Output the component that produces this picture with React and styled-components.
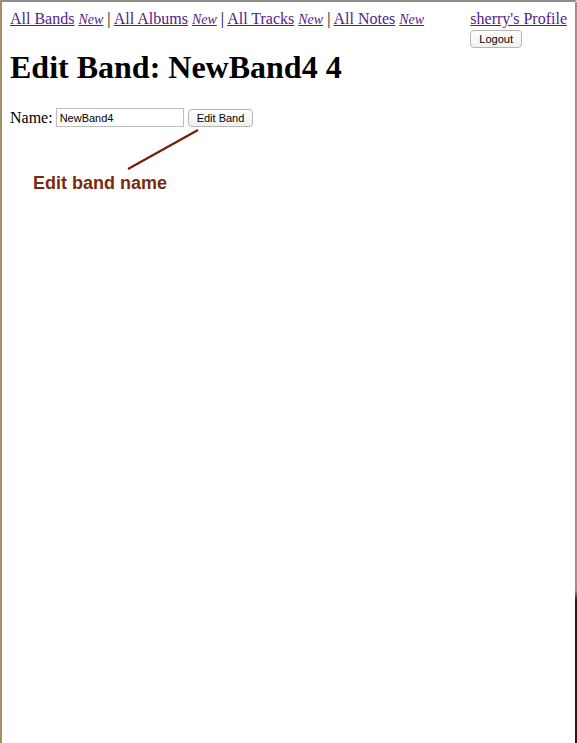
import React from "react";
import styled, { createGlobalStyle } from "styled-components";

const Global = createGlobalStyle`
  html, body { margin: 0; padding: 0; background: #fff; }
  body { font-family: "Liberation Serif", "Times New Roman", serif; font-size: 16px; }
`;

const Frame = styled.div`
  position: relative;
  box-sizing: border-box;
  width: 577px;
  height: 743px;
  border-top: 2px solid #8c8c8c;
  border-left: 2px solid #a58f64;
  border-right: 2px solid transparent;
  background:
    linear-gradient(to bottom, #b38a78 0, #b38a78 590px, #1e1c22 600px, #1e1c22 100%) right top / 2px 100% no-repeat border-box,
    #fff;
  overflow: hidden;
`;

const Page = styled.div`
  padding: 8px;
`;

const TopBar = styled.div`
  display: flex;
  justify-content: space-between;
  align-items: flex-start;
  height: 18px;
  line-height: 18px;
`;

const Nav = styled.nav`
  display: block;
`;

const Link = styled.a`
  color: #551a8b;
  text-decoration: underline;
  font-size: ${(p) => (p.$small ? "14px" : "16px")};
  font-style: ${(p) => (p.$small ? "italic" : "normal")};
  cursor: pointer;
`;

const Sep = styled.span`
  color: #000;
`;

const Profile = styled.div`
  display: flex;
  flex-direction: column;
  align-items: flex-start;
`;

const Btn = styled.button`
  font-family: "Liberation Sans", Arial, sans-serif;
  font-size: 11px;
  color: #000;
  height: 18px;
  padding: 0 8px;
  margin: ${(p) => p.$m || "0"};
  border: 1px solid #b5b5b5;
  border-radius: 4px;
  background: linear-gradient(#ffffff, #f1f1f1);
  line-height: 16px;
`;

const Title = styled.h1`
  font-size: 32px;
  font-weight: bold;
  margin: 21px 0 22px;
  line-height: 37px;
`;

const Form = styled.form`
  display: flex;
  align-items: center;
  line-height: 18px;
`;

const Label = styled.label`
  margin-right: 3px;
`;

const Input = styled.input`
  box-sizing: border-box;
  width: 128px;
  height: 19px;
  border: 1px solid #bdbdbd;
  padding: 0 3px;
  font-family: "Liberation Sans", Arial, sans-serif;
  font-size: 11px;
  color: #000;
  margin: 0 4px 0 0;
  outline: none;
`;

const Annotation = styled.div`
  position: absolute;
  left: 0;
  top: 0;
  width: 100%;
  height: 100%;
  pointer-events: none;
`;

const Callout = styled.div`
  position: absolute;
  left: 31px;
  top: 171px;
  font-family: "Liberation Sans", Arial, sans-serif;
  font-weight: bold;
  font-size: 18px;
  color: #7b2a0e;
`;

export default function App() {
  return (
    <>
      <Global />
      <Frame>
        <Page>
          <TopBar>
            <Nav>
              <Link>All Bands</Link> <Link $small>New</Link> <Sep>|</Sep> <Link>All Albums</Link> <Link $small>New</Link> <Sep>|</Sep> <Link>All Tracks</Link> <Link $small>New</Link> <Sep>|</Sep> <Link>All Notes</Link> <Link $small>New</Link>
            </Nav>
            <Profile>
              <Link>sherry's Profile</Link>
              <Btn $m="2px 0 0 0">Logout</Btn>
            </Profile>
          </TopBar>
          <Title>Edit Band: NewBand4 4</Title>
          <Form onSubmit={(e) => e.preventDefault()}>
            <Label>Name:</Label>
            <Input defaultValue="NewBand4" />
            <Btn>Edit Band</Btn>
          </Form>
        </Page>
        <Annotation>
          <svg width="577" height="743" style={{ position: "absolute", left: -2, top: -2 }}>
            <line x1="198" y1="130" x2="128" y2="169" stroke="#7a1c0c" strokeWidth="2.2" />
          </svg>
          <Callout>Edit band name</Callout>
        </Annotation>
      </Frame>
    </>
  );
}
